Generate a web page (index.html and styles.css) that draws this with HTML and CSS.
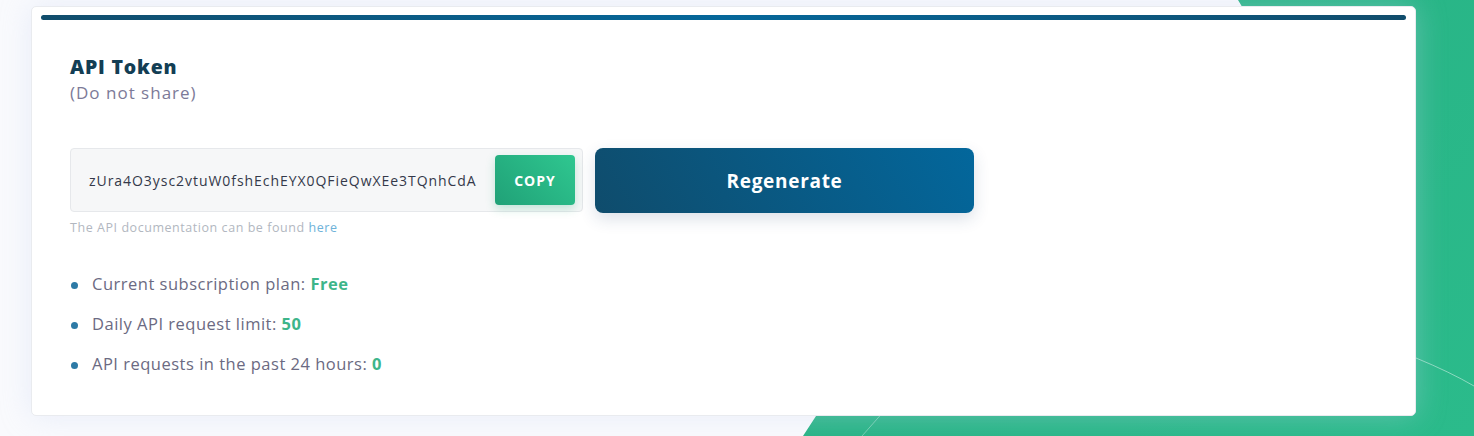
FILE: index.html
```html
<!DOCTYPE html>
<html lang="en">
<head>
<meta charset="utf-8">
<title>API Token</title>
<link rel="stylesheet" href="styles.css">
</head>
<body>
<div class="backdrop">
  <svg class="backdrop-lines" width="1474" height="436" viewBox="0 0 1474 436">
    <line x1="862" y1="436" x2="1000" y2="280" stroke="rgba(255,255,255,0.35)" stroke-width="1"/>
    <path d="M1416 358 Q1450 372 1474 386" fill="none" stroke="rgba(255,255,255,0.45)" stroke-width="1"/>
  </svg>
</div>
<main class="page">
  <section class="card">
    <div class="card-bar"></div>
    <div class="card-body">
      <h2 class="title">API Token</h2>
      <p class="subtitle">(Do not share)</p>
      <div class="token-row">
        <div class="token-col">
          <div class="token-box">
            <span class="token-text">zUra4O3ysc2vtuW0fshEchEYX0QFieQwXEe3TQnhCdA</span>
            <button class="btn-copy">COPY</button>
          </div>
          <p class="help">The API documentation can be found <a class="help-link" href="#">here</a></p>
        </div>
        <button class="btn-regen">Regenerate</button>
      </div>
      <ul class="stats">
        <li class="stat">Current subscription plan: <strong class="val">Free</strong></li>
        <li class="stat">Daily API request limit: <strong class="val">50</strong></li>
        <li class="stat">API requests in the past 24 hours: <strong class="val">0</strong></li>
      </ul>
    </div>
  </section>
</main>
</body>
</html>
```
FILE: styles.css
```css
html, body {
  margin: 0;
  padding: 0;
}
body {
  width: 1474px;
  height: 436px;
  overflow: hidden;
  background: #f9fafd;
  font-family: "Open Sans", "Liberation Sans", sans-serif;
  position: relative;
}
.backdrop {
  position: absolute;
  inset: 0;
  background: linear-gradient(135deg, #22a67c 0%, #2bbb8b 100%);
  clip-path: polygon(1238px 0, 1474px 0, 1474px 436px, 803px 436px, 1067px 30px, 1250px 20px);
}
.backdrop-lines {
  position: absolute;
  left: 0;
  top: 0;
}
.page {
  position: relative;
  padding: 6px 0 0 31px;
}
.card {
  width: 1385px;
  height: 410px;
  box-sizing: border-box;
  background: #ffffff;
  border: 1px solid #e9ebef;
  border-radius: 5px;
  box-shadow: 0 0 30px rgba(200, 212, 240, 0.35);
  padding: 8px 9px 0 9px;
  display: flex;
  flex-direction: column;
}
.card-bar {
  height: 5px;
  border-radius: 3px;
  background: linear-gradient(90deg, #114d6c 0%, #05679a 50%, #114d6c 100%);
}
.card-body {
  padding: 0 0 0 29px;
}
.title {
  margin: 34px 0 0 0;
  font-size: 19.5px;
  font-weight: 800;
  letter-spacing: 0.8px;
  color: #133e54;
  line-height: 26px;
}
.subtitle {
  margin: 0;
  font-size: 17px;
  letter-spacing: 1px;
  color: #7c7a98;
  line-height: 26px;
}
.token-row {
  display: flex;
  align-items: flex-start;
  gap: 12px;
  margin-top: 42px;
}
.token-col {
  display: flex;
  flex-direction: column;
}
.token-box {
  width: 513px;
  height: 64px;
  box-sizing: border-box;
  display: flex;
  align-items: center;
  justify-content: space-between;
  padding: 0 7px 0 18px;
  background: #f6f7f8;
  border: 1px solid #e6e8eb;
  border-radius: 4px;
}
.token-text {
  font-size: 14px;
  color: #34394a;
  letter-spacing: 0.95px;
}
.btn-copy {
  width: 80px;
  height: 50px;
  border: 0;
  border-radius: 4px;
  background: linear-gradient(45deg, #20a177 0%, #2fc790 100%);
  color: #fff;
  font-family: inherit;
  font-weight: 700;
  font-size: 14px;
  letter-spacing: 1px;
  box-shadow: 0 4px 10px rgba(40, 170, 120, 0.25);
}
.help {
  margin: 7px 0 0 0;
  font-size: 12.5px;
  letter-spacing: 0.55px;
  color: #b2b7bf;
}
.help-link {
  color: #6eb2d9;
  text-decoration: none;
}
.btn-regen {
  width: 379px;
  height: 65px;
  border: 0;
  border-radius: 8px;
  background: linear-gradient(60deg, #0f4c6c 0%, #03679c 100%);
  color: #fff;
  font-family: inherit;
  font-weight: 700;
  font-size: 19px;
  letter-spacing: 0.7px;
  box-shadow: 0 6px 16px rgba(40, 70, 110, 0.16);
}
.stats {
  list-style: none;
  margin: 36px 0 0 0;
  padding: 0;
  display: flex;
  flex-direction: column;
  gap: 16px;
}
.stat {
  position: relative;
  padding-left: 22px;
  font-size: 16.5px;
  letter-spacing: 0.5px;
  line-height: 24px;
  color: #6b6a82;
}
.stat::before {
  content: "";
  position: absolute;
  left: 1px;
  top: 10px;
  width: 7px;
  height: 7px;
  border-radius: 50%;
  background: #2d7aa6;
}
.val {
  color: #3db58a;
  font-weight: 700;
}
```
